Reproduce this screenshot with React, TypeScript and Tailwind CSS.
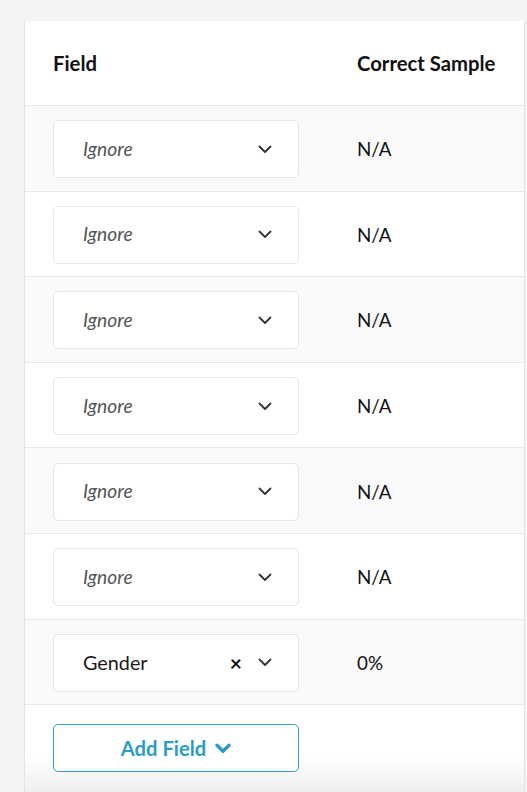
import React from "react";

type Row = {
  value: string | null;
  sample: string;
};

const rows: Row[] = [
  { value: null, sample: "N/A" },
  { value: null, sample: "N/A" },
  { value: null, sample: "N/A" },
  { value: null, sample: "N/A" },
  { value: null, sample: "N/A" },
  { value: null, sample: "N/A" },
  { value: "Gender", sample: "0%" },
];

function Chevron() {
  return (
    <svg width="14" height="9" viewBox="0 0 14 9" fill="none">
      <path d="M1.5 1.5 7 7l5.5-5.5" stroke="#333" strokeWidth="1.8" strokeLinecap="round" strokeLinejoin="round" />
    </svg>
  );
}

function FieldSelect({ value }: { value: string | null }) {
  return (
    <div className="flex h-[58px] w-[246px] items-center rounded-[5px] border border-[#e6e6e6] bg-white pl-[29px] pr-[26px]">
      {value ? (
        <span className="flex-1 text-[19.8px] text-[#1a1a1a]">{value}</span>
      ) : (
        <span className="flex-1 text-[19.2px] italic text-[#555]">Ignore</span>
      )}
      {value && <span className="mr-[16px] text-[21px] font-bold leading-none text-[#111]">×</span>}
      <Chevron />
    </div>
  );
}

export default function App() {
  return (
    <main
      className="h-[792px] overflow-hidden bg-[#f4f4f4] pl-[24px] pr-[2px] pt-[21px]"
      style={{ fontFamily: "Lato, 'Open Sans', sans-serif" }}
    >
      <div className="h-full border-l border-r border-[#e3e3e3] bg-white">
        <div className="flex h-[85px] items-center border-b border-[#e8e8e8] pl-[28px] text-[20.3px] font-bold text-[#111]">
          <div className="w-[304px]">Field</div>
          <div>Correct Sample</div>
        </div>
        {rows.map((row, i) => (
          <div
            key={i}
            className={`flex h-[85.6px] items-center border-b border-[#e8e8e8] pl-[28px] pt-[2px] ${
              i % 2 === 0 ? "bg-[#fafafa]" : "bg-white"
            }`}
          >
            <div className="w-[304px]">
              <FieldSelect value={row.value} />
            </div>
            <div className="text-[18.8px] text-[#111]">{row.sample}</div>
          </div>
        ))}
        <div className="h-full bg-gradient-to-b from-white from-[50px] to-[#eeeeee] to-[90px] pl-[28px] pt-[19px]">
          <button className="flex h-[48px] w-[246px] items-center justify-center gap-[9px] rounded-[5px] border border-[#2a9cc7] bg-white text-[20.2px] font-bold text-[#2a9cc7]">
            Add Field
            <svg width="16" height="11" viewBox="0 0 16 11" fill="none">
              <path d="M2 2.2 8 8.2l6-6" stroke="#2a9cc7" strokeWidth="3.4" strokeLinecap="round" strokeLinejoin="round" />
            </svg>
          </button>
        </div>
      </div>
    </main>
  );
}
